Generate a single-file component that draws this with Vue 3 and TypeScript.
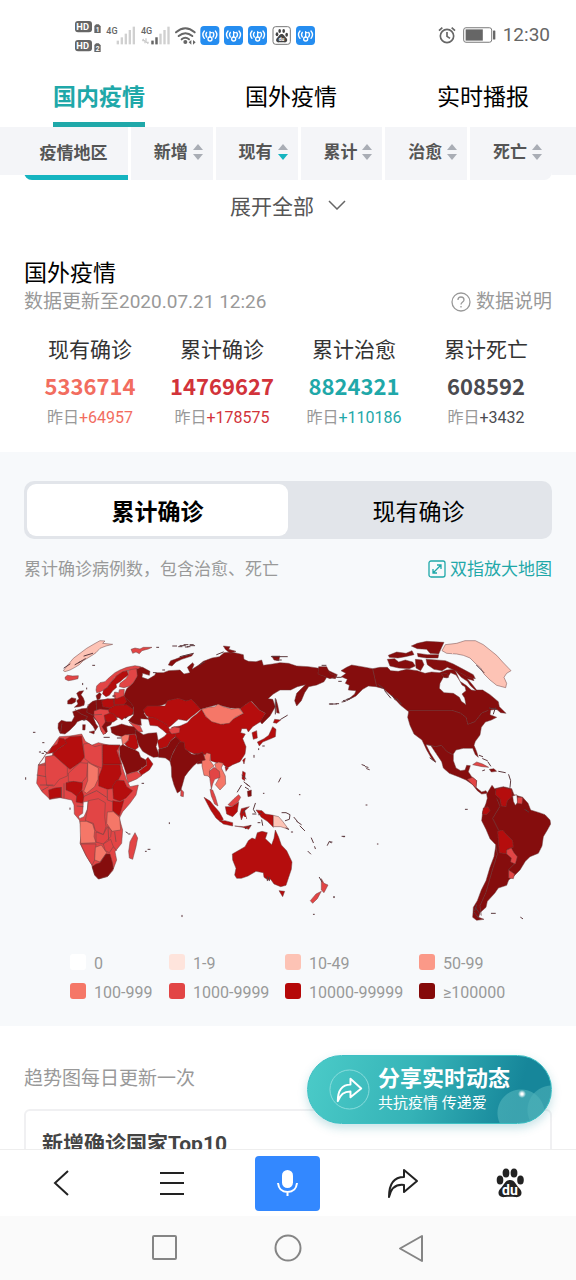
<script setup lang="ts">
import { ref } from 'vue'

interface Stat { label: string; value: string; delta: string; tone: string }
interface Land { c: string; p: string }

const tabs = ['国内疫情', '国外疫情', '实时播报']
const activeTab = ref(0)
const columns = ['新增', '现有', '累计', '治愈', '死亡']
const sorted = ref(1)
const modes = ['累计确诊', '现有确诊']
const mode = ref(0)

const stats: Stat[] = [
  { label: '现有确诊', value: '5336714', delta: '+64957', tone: 'orange' },
  { label: '累计确诊', value: '14769627', delta: '+178575', tone: 'red' },
  { label: '累计治愈', value: '8824321', delta: '+110186', tone: 'teal' },
  { label: '累计死亡', value: '608592', delta: '+3432', tone: 'dark' },
]

const legend = [
  { text: '0', c: 'l0' }, { text: '1-9', c: 'l1' }, { text: '10-49', c: 'l2' }, { text: '50-99', c: 'l3' },
  { text: '100-999', c: 'l4' }, { text: '1000-9999', c: 'l5' }, { text: '10000-99999', c: 'l6' }, { text: '≥100000', c: 'l7' },
]

const west: Land[] = [
  { c: 'l2', p: '130,122 145,103 160,85 180,70 200,55 222,42 240,32 255,33 248,40 278,43 258,48 240,55 228,68 218,75 205,83 190,92 178,104 165,112 150,120 135,125' },
  { c: 'l5', p: '135,142 142,136 158,138 175,137 174,146 158,150 145,152 136,148' },
  { c: 'l5', p: '333,58 345,54 360,57 370,52 396,52 385,57 366,62 358,71 348,66 338,70' },
  { c: 'l7', p: '445,105 452,92 465,88 490,78 520,71 515,78 485,88 468,96 456,108' },
  { c: 'l5', p: '228,180 230,168 240,158 255,155 265,145 285,128 300,120 320,112 345,107 362,110 356,116 335,120 320,122 300,132 285,142 272,158 262,172 250,180 240,186 230,188' },
  { c: 'l6', p: '248,192 250,180 262,172 272,158 290,137 308,125 322,122 325,135 312,145 300,155 288,163 290,172 278,182 268,196 258,200' },
  { c: 'l5', p: '325,122 335,118 350,116 352,138 342,155 330,168 312,173 298,170 300,160 318,146 325,134' },
  { c: 'l7', p: '228,197 238,188 244,192 240,206 232,210' },
  { c: 'l7', p: '170,190 178,184 191,182 183,194 190,204 194,215 192,226 178,230 163,232 174,222 170,212 177,206' },
  { c: 'l7', p: '143,212 155,203 168,206 166,216 155,222 143,222' },
  { c: 'l7', p: '115,280 124,271 140,275 155,275 163,260 158,245 172,240 185,236 200,235 208,222 218,214 232,210 260,208 295,205 312,200 330,215 340,230 340,252 325,258 318,265 300,262 285,262 277,275 272,285 260,290 262,305 255,312 245,305 240,288 230,272 220,262 228,282 234,290 226,302 220,290 208,276 200,270 185,270 172,275 165,285 150,300 135,312 120,310 114,295' },
  { c: 'l6', p: '245,212 262,206 280,208 283,230 268,234 248,230' },
  { c: 'l6', p: '283,208 295,193 312,195 320,215 310,225 283,224' },
  { c: 'l6', p: '262,240 285,226 320,224 342,240 335,255 315,262 306,270 295,262 270,258' },
  { c: 'l5', p: '284,186 296,188 298,179 313,178 312,197 290,206 280,200' },
  { c: 'l6', p: '248,254 270,248 284,254 292,268 280,276 260,276' },
  { c: 'l5', p: '222,243 240,237 265,240 268,250 252,256 256,276 246,290 258,308 250,314 242,300 236,280 222,260' },
  { c: 'l7', p: '188,284 196,284 195,300 188,300' },
  { c: 'l7', p: '207,306 224,302 222,312' },
  { c: 'l7', p: '272,292 288,288 305,282 325,288 345,290 355,302 350,312 325,314 308,320 288,316 275,308' },
  { c: 'l5', p: '328,277 345,282 360,287 368,305 356,306 346,295' },
  { c: 'l4', p: '304,320 315,314 330,314 326,330 308,346' },
  { c: 'l6', p: '328,314 346,312 352,330 355,352 345,360 322,350 314,342 326,330' },
  { c: 'l7', p: '298,350 308,344 325,352 345,360 356,366 362,382 378,390 380,404 366,415 350,425 335,428 320,434 310,405 300,382' },
  { c: 'l6', p: '378,388 384,382 399,402 388,420 364,436 356,424 380,406' },
  { c: 'l5', p: '318,434 350,424 366,436 350,447 324,458' },
  { c: 'l7', p: '345,300 358,306 370,314 386,310 410,308 414,330 408,350 420,380 400,382 385,374 368,364 356,345 350,325' },
  { c: 'l6', p: '384,262 400,262 425,275 440,284 450,300 462,306 448,318 428,300 412,288 390,286' },
  { c: 'l6', p: '412,332 432,320 440,312 462,306 468,318 452,332 442,350 418,358' },
  { c: 'l5', p: '446,300 462,290 480,294 478,308 455,312' },
  { c: 'l7', p: '416,358 442,350 452,332 468,320 482,334 462,362 456,376 450,394 436,384 416,382' },
  { c: 'l7', p: '450,394 456,376 468,352 478,336 492,336 495,356 515,372 530,374 548,366 556,390 535,395 520,408 505,425 494,440 488,462 482,482 472,489 462,465 455,440 454,412' },
  { c: 'l5', p: '483,478 491,486 490,500 482,498' },
  { c: 'l5', p: '118,320 150,318 185,312 196,334 215,346 235,338 268,346 300,345 296,365 302,390 308,415 320,450 330,470 355,465 348,495 330,520 308,545 298,565 308,600 305,640 285,665 290,690 278,722 262,740 235,747 224,735 215,704 197,675 180,640 186,600 178,570 163,552 162,525 155,510 120,503 90,508 66,485 50,460 55,405 78,372 95,352' },
  { c: 'l6', p: '130,332 150,320 185,318 188,345 194,380 182,396 150,418 128,400 100,376 100,366 132,345' },
  { c: 'l6', p: '84,374 96,350 112,342 118,324 132,326 140,340 118,354 104,366' },
  { c: 'bg', p: '55,405 68,388 78,372 98,368 97,378 80,380 76,398' },
  { c: 'l5', p: '190,342 205,340 225,350 246,344 247,415 215,402 194,386' },
  { c: 'l6', p: '248,344 300,346 290,362 304,403 248,403' },
  { c: 'l6', p: '248,403 300,403 304,432 292,455 285,475 262,478 236,468 236,440 246,415' },
  { c: 'l4', p: '203,397 235,414 234,448 224,470 200,490 191,484 203,452' },
  { c: 'l5', p: '145,430 180,398 203,400 200,440 185,458 145,455' },
  { c: 'l5', p: '76,380 102,376 142,412 142,438 118,448 102,468 80,466 76,430' },
  { c: 'l6', p: '138,458 160,454 188,458 186,478 172,500 155,487 138,480' },
  { c: 'l6', p: '86,480 104,474 124,472 124,502 106,503 88,508' },
  { c: 'l6', p: '170,498 186,480 192,500 188,520 168,516' },
  { c: 'bg', p: '190,516 204,514 202,538 192,560 178,566 176,558 188,550' },
  { c: 'l6', p: '278,468 290,450 312,452 320,470 338,482 318,504 300,514 280,506' },
  { c: 'l6', p: '278,512 300,516 312,510 305,535 298,558 278,542' },
  { c: 'l4', p: '262,546 280,545 299,562 302,600 276,604 260,580' },
  { c: 'l5', p: '205,512 235,506 256,518 254,560 258,590 250,614 226,602 220,580 196,572 202,540' },
  { c: 'l4', p: '180,574 200,574 218,582 224,602 222,620 228,638 182,640' },
  { c: 'l5', p: '228,606 250,614 262,590 274,602 272,620 250,642 228,636' },
  { c: 'l5', p: '182,642 228,642 224,690 216,706 200,680' },
  { c: 'l4', p: '226,652 244,645 260,668 240,696 224,690' },
  { c: 'l5', p: '250,642 272,628 280,650 268,668 256,662' },
  { c: 'l7', p: '216,710 228,702 240,698 258,672 270,672 278,700 280,716 264,738 236,747 224,735' },
  { c: 'l5', p: '345,608 353,624 348,650 338,688 328,684 326,664 330,635' },
]

const east: Land[] = [
  { c: 'l7', p: '-135,110 -112,112 -90,124 -92,136 -112,130 -114,142 -96,148 -76,136 -72,128 -50,128 -34,122 0,120 12,132 30,128 22,112 38,98 42,104 36,118 55,106 70,94 96,84 118,80 132,68 155,66 190,74 192,88 205,94 228,95 245,90 250,106 278,102 300,98 325,100 350,108 385,110 412,114 442,120 472,134 466,146 440,142 432,155 410,165 386,170 374,188 364,212 350,228 344,212 350,190 376,164 352,170 332,180 300,180 280,192 264,206 278,208 286,230 270,258 246,282 238,272 256,250 238,240 215,214 196,225 190,236 150,234 112,224 62,238 -20,212 -60,228 -100,238 -108,250 -100,262 -92,268 -118,266 -116,286 -135,284 -155,272 -140,256 -140,232 -166,214 -168,196 -160,176 -142,160 -130,140' },
  { c: 'l6', p: '-110,240 -98,228 -45,228 -38,212 -5,205 18,213 35,208 62,238 48,250 32,262 20,272 -5,268 -28,288 -40,296 -62,280 -90,264 -102,256' },
  { c: 'l6', p: '-25,292 0,288 22,278 34,264 50,252 65,238 78,260 98,274 130,283 158,268 190,250 180,236 196,224 212,213 238,240 256,250 240,276 218,290 205,306 200,296 185,296 182,308 196,312 188,326 198,350 195,372 180,395 158,404 142,414 128,402 110,398 92,392 90,374 72,374 48,374 20,362 2,346 -12,326' },
  { c: 'l4', p: '65,238 85,232 105,230 114,222 130,230 155,237 176,234 190,250 164,263 148,280 122,283 95,275 78,260' },
  { c: 'l7', p: '45,370 70,374 66,400 52,402' },
  { c: 'l4', p: '66,388 80,368 92,372 90,392 102,408 90,418 92,446 84,438 72,436 66,408' },
  { c: 'l4', p: '104,402 116,396 130,400 124,414 136,438 137,462 120,480 106,464 116,446' },
  { c: 'l5', p: '88,424 102,412 118,424 120,442 104,448 98,462 94,478 90,450' },
  { c: 'l5', p: '90,478 98,480 106,500 114,528 104,522 94,498' },
  { c: 'l6', p: '216,308 230,302 232,324 220,328' },
  { c: 'l6', p: '278,290 288,298 286,320 268,328 248,336 238,348 232,336 252,326 266,316' },
  { c: 'l6', p: '284,268 302,270 290,280 280,278' },
  { c: 'l7', p: '288,208 293,225 298,250 290,248 288,230' },
  { c: 'l6', p: '188,390 196,384 192,402' },
  { c: 'l6', p: '135,410 145,414 138,424' },
  { c: 'l6', p: '72,502 90,513 104,530 118,546 130,568 122,576 108,564 92,540' },
  { c: 'l6', p: '118,572 135,572 158,578 158,588 130,582' },
  { c: 'l6', p: '164,588 190,590 214,586 206,598 188,592' },
  { c: 'l6', p: '136,530 155,530 176,516 172,545 158,560 140,552' },
  { c: 'l5', p: '144,524 162,506 176,494 182,502 174,516 155,530' },
  { c: 'l6', p: '184,536 208,530 194,542 200,566 190,556 184,570 180,552' },
  { c: 'l6', p: '228,540 246,542 256,552 280,556 280,592 262,574 244,562' },
  { c: 'l2', p: '280,556 296,560 308,574 326,598 302,590 280,590' },
  { c: 'l6', p: '188,424 196,428 194,452 186,446' },
  { c: 'l7', p: '202,484 214,480 214,498 204,500' },
  { c: 'l6', p: '157,672 178,660 195,650 205,632 216,624 226,628 232,608 246,604 262,608 256,626 275,644 282,625 286,600 296,622 304,645 320,662 336,696 334,718 318,766 302,770 282,762 272,748 264,750 252,742 250,728 228,724 204,738 184,745 170,745 164,735 168,715 158,690' },
  { c: 'l6', p: '297,782 314,784 308,800' },
  { c: 'l5', p: '424,746 432,760 444,765 432,788 424,780' },
  { c: 'l5', p: '424,784 412,806 398,820 391,812 408,792' },
  { c: 'l7', p: '130,48 150,50 146,58 168,64 150,70 136,58' },
  { c: 'l7', p: '275,78 300,78 296,92 282,90' },
]

const americas: Land[] = [
  { c: 'l7', p: '-34,110 -10,110 0,130 20,138 0,146 -20,138 -36,132' },
  { c: 'l7', p: '33,122 50,112 65,105 95,110 128,116 150,112 172,112 182,122 205,124 230,118 262,122 285,130 305,126 328,128 350,120 372,118 400,122 428,140 432,152 412,146 428,165 440,180 458,180 480,194 505,215 508,230 528,250 512,248 500,238 482,240 480,254 500,262 484,270 466,276 454,292 450,315 436,334 432,346 440,365 445,382 436,374 428,355 400,355 378,360 370,372 370,392 378,414 392,422 405,420 410,406 421,407 415,425 425,440 440,452 438,472 455,486 468,482 472,490 455,492 442,482 428,464 408,450 385,440 358,430 340,414 335,395 318,370 302,346 288,344 300,368 318,396 306,388 290,360 276,330 252,312 240,286 233,262 236,245 212,226 188,200 160,176 138,170 115,168 98,178 78,198 50,212 74,192 78,182 55,180 58,166 46,160 52,148 34,140 48,130' },
  { c: 'bg', p: '340,142 352,144 362,128 378,135 388,150 396,165 405,170 408,182 396,192 404,204 408,224 394,214 388,202 370,190 342,188 328,175 330,160' },
  { c: 'bg', p: '376,122 394,142 412,154 422,168 438,182 424,180 408,166 390,154' },
  { c: 'l7', p: '244,48 262,40 290,34 342,37 335,52 326,72 300,70 290,58 262,56' },
  { c: 'l7', p: '175,76 200,66 228,70 246,62 252,74 226,80 204,84 178,82' },
  { c: 'l7', p: '172,88 194,86 206,96 226,90 248,96 256,108 238,116 206,114 180,108' },
  { c: 'l7', p: '256,88 276,90 282,104 272,122 258,114' },
  { c: 'l7', p: '262,70 292,74 326,74 324,84 290,84 264,80' },
  { c: 'l7', p: '288,88 320,90 346,92 370,102 400,118 430,134 436,146 416,142 386,126 352,112 336,122 312,118 292,104' },
  { c: 'l7', p: '334,132 350,130 356,142 342,142' },
  { c: 'l2', p: '336,62 346,44 380,40 405,32 436,32 460,44 480,60 500,76 518,96 543,122 530,130 522,142 530,160 527,173 500,166 480,150 462,132 452,114 438,102 420,84 400,76 380,72 350,70' },
  { c: 'l5', p: '428,404 440,396 458,402 476,412 456,410' },
  { c: 'l7', p: '478,418 492,416 500,424 484,426' },
  { c: 'l5', p: '412,448 428,442 440,452 438,474 428,464' },
  { c: 'l7', p: '470,492 486,466 494,476 520,470 545,476 552,494 578,502 594,520 602,540 628,548 645,554 660,570 662,582 652,600 640,620 636,648 625,670 600,680 586,694 570,720 552,738 536,750 530,766 505,774 494,790 472,814 468,832 450,848 446,862 462,868 440,871 428,862 430,832 442,812 454,780 468,752 480,712 492,680 498,645 480,626 468,598 455,572 458,545 468,520 472,505' },
  { c: 'l6', p: '498,476 520,472 545,478 546,500 532,512 528,530 514,528 510,506 496,494' },
  { c: 'bg', p: '548,498 560,494 564,516 556,526 550,514' },
  { c: 'l5', p: '562,502 578,502 576,522 562,520' },
  { c: 'l6', p: '460,534 474,530 480,542 470,554 457,552' },
  { c: 'l6', p: '503,604 518,600 530,614 548,632 550,652 532,658 530,672 508,668' },
  { c: 'l5', p: '530,660 544,654 552,668 562,680 556,702 542,696 544,684 530,672' },
  { c: 'l5', p: '536,720 554,732 550,746 536,744' },
]

const shield = [421, 492, 564, 708]
</script>

<template>
  <div class="screen">
    <header class="status">
      <svg class="status-left" viewBox="45 48 723 108" aria-label="信号状态">
        <g v-for="(n, i) in ['1', '2']" :key="n" :transform="`translate(0 ${i * 57})`">
          <rect x="45" y="60" width="51" height="34" rx="9" fill="#666" />
          <text x="49" y="87" font-size="28" font-weight="700" fill="#fff">HD</text>
          <path d="M108 70h8l6 6v20h-19V75z" fill="#666" />
          <text x="107" y="93" font-size="20" font-weight="700" fill="#fff">{{ n }}</text>
        </g>
        <g v-for="x in [139, 243]" :key="x" :transform="`translate(${x} 0)`">
          <text x="0" y="100" font-size="27" font-weight="500" fill="#666">4G</text>
          <g fill="#d0d0d0">
            <rect x="31" y="119" width="7" height="11" /><rect x="43" y="109" width="7" height="21" />
            <rect x="55" y="98" width="7" height="32" /><rect x="67" y="87" width="7" height="43" />
            <rect x="79" y="77" width="7" height="53" />
          </g>
        </g>
        <g fill="#666"><rect x="274" y="119" width="7" height="11" /><rect x="286" y="109" width="7" height="21" /></g>
        <path d="M247 119h8m-8 0 4-5m4 5v8M258 112v12m0 0h8m-4 4 4-4" stroke="#ccc" stroke-width="4" fill="none" />
        <g fill="none" stroke="#666" stroke-width="6" stroke-linecap="round">
          <path d="M348 94q28-24 56 0M356 105q20-17 41 0M365 115q11-9 22 0" />
        </g>
        <circle cx="376" cy="123" r="6" fill="#666" />
        <path d="M386 124l8-7v14zM407 124l-8-7v14z" fill="#666" />
        <g v-for="x in shield" :key="x" :transform="`translate(${x} 75)`">
          <rect width="57" height="57" rx="11" fill="#258df0" />
          <g fill="none" stroke="#fff" stroke-width="4" stroke-linecap="round">
            <path d="M12 15q-9 11 0 22M19 19q-5 7 0 14M45 15q9 11 0 22M38 19q5 7 0 14M29 17v16M29 20h5" />
            <circle cx="29" cy="39" r="6" />
          </g>
        </g>
        <rect x="639" y="77" width="52" height="53" rx="8" fill="#fff" stroke="#777" stroke-width="3" />
        <g fill="#444">
          <ellipse cx="651" cy="100" rx="4" ry="6" /><ellipse cx="659" cy="90" rx="4" ry="6" />
          <ellipse cx="671" cy="90" rx="4" ry="6" /><ellipse cx="680" cy="101" rx="4" ry="6" />
          <path d="M665 99c7 0 9 8 14 12 6 6 1 15-7 13h-14c-8 2-13-7-7-13 5-4 7-12 14-12z" />
        </g>
        <text x="656" y="121" font-size="15" font-weight="700" fill="#fff">du</text>
      </svg>
      <div class="status-right">
        <svg class="alarm" viewBox="0 0 54 54" fill="none" stroke="#666" stroke-width="5">
          <circle cx="27" cy="30" r="20" /><path d="M27 18v13l9 6M3 14l10-9M51 14 41 5" />
        </svg>
        <svg class="battery" viewBox="0 0 100 48">
          <rect x="2" y="2" width="85" height="44" rx="7" fill="none" stroke="#777" stroke-width="3" />
          <rect x="8" y="7" width="52" height="34" fill="#666" /><rect x="91" y="10" width="7" height="28" rx="2" fill="#666" />
        </svg>
        <time>12:30</time>
      </div>
    </header>

    <nav class="tabs">
      <button v-for="(t, i) in tabs" :key="t" :class="{ on: activeTab === i }" @click="activeTab = i"><span>{{ t }}</span></button>
    </nav>

    <div class="sortbar">
      <div class="sort-cols">
        <button class="region">疫情地区</button>
        <button v-for="(c, i) in columns" :key="c" class="sort" :class="{ down: sorted === i }" @click="sorted = i">
          {{ c }}
          <svg viewBox="0 0 10 16"><path class="up" d="M5 0l5 6H0z" /><path class="dn" d="M5 16l5-6H0z" /></svg>
        </button>
      </div>
    </div>

    <main class="content">
      <button class="expand">
        展开全部
        <svg viewBox="0 0 18 10"><path d="M1 1l8 8 8-8" fill="none" stroke="#666" stroke-width="1.5" /></svg>
      </button>

      <section class="overview">
        <h2>国外疫情</h2>
        <div class="meta">
          <span>数据更新至2020.07.21 12:26</span>
          <a href="#about">
            <svg viewBox="0 0 20 20" fill="none" stroke="#999" stroke-width="1.3">
              <circle cx="10" cy="10" r="9" /><path d="M7 8q0-3 3-3t3 3c0 2-3 2-3 4.500M10 14v1.500" />
            </svg>
            数据说明
          </a>
        </div>
        <div class="stats">
          <div v-for="s in stats" :key="s.label" class="stat" :class="s.tone">
            <span class="label">{{ s.label }}</span>
            <strong>{{ s.value }}</strong>
            <span class="delta">昨日<em>{{ s.delta }}</em></span>
          </div>
        </div>
      </section>

      <section class="map-panel">
        <div class="segment">
          <button v-for="(m, i) in modes" :key="m" :class="{ on: mode === i }" @click="mode = i">{{ m }}</button>
        </div>
        <div class="caption">
          <span>累计确诊病例数，包含治愈、死亡</span>
          <a href="#map">
            <svg viewBox="0 0 18 18" fill="none" stroke="#1fa8a9" stroke-width="1.3">
              <rect x="1" y="1" width="16" height="16" rx="2" /><path d="M5 13l8-8M9 5h4v4M5 9v4h4" />
            </svg>
            双指放大地图
          </a>
        </div>
        <svg class="map" viewBox="0 0 1584 900" role="img" aria-label="世界疫情地图">
          <defs>
            <filter id="coast" x="0" y="0" width="1" height="1">
              <feTurbulence type="fractalNoise" baseFrequency="0.18" numOctaves="2" seed="4" />
              <feDisplacementMap in="SourceGraphic" scale="4" xChannelSelector="R" yChannelSelector="G" />
            </filter>
          </defs>
          <g filter="url(#coast)">
            <g transform="translate(468 0)">
              <polygon v-for="(l, i) in east" :key="i" :class="['land', l.c]" :points="l.p" />
            </g>
            <g transform="translate(-12 0)">
              <polygon v-for="(l, i) in west" :key="i" :class="['land', l.c]" :points="l.p" />
              <path class="border" d="M165 238l18 14 20 8-8 10M205 222l-5 25 18 8 28-2M228 212l2 28M55 405h22M50 435l28 5M60 465h40M64 482l22-12M124 472v32M132 460v44M190 500l40-18 30 20M262 480v30l16 5M264 590l2 40M284 606l4 30M280 650l10 12M170 528l20 2M126 280l-4 28" />
              <path class="islets" d="M458 48h12M476 50h10M492 44h12M496 51h8M510 47h14M410 52h6M218 106h6M188 160v4M200 174v3M192 268v4M252 322h16M292 324h10M58 366h4M66 370h5M73 364l8 4M40 307h5M68 338h4M17 443v5M366 460h5M318 606l6 4M326 612h4M376 664h3M384 658h6M448 578v3M400 128h8M428 120h6M278 198h8M150 534v4M132 114l18-12M165 104l18-10M192 78l26-8M176 98l20-12" />
            </g>
            <g transform="translate(918 0)">
              <polygon v-for="(l, i) in americas" :key="i" :class="['land', l.c]" :points="l.p" />
              <path class="border" d="M128 116l12 54M236 241h130l25 8 18 14 4 20 22-8 20-26 20-8M292 344l24 6 18-4 16 18 18 10M500 505l10 24-22 36 18 36M497 645l5 28-14 44-20 70-18 40 4 30M553 702l-18 18" />
              <path class="islets" d="M96 404l8 3M106 410l8 2M110 416l8 3M108 525h3M406 538h6M36 619h8M0 636h6M142 642h2M12 800v3M484 850h12M572 862l6 4M448 376l10 4M458 386l14 6M474 396l8 12M464 420l-6 2M506 424l20 4M536 434l6 18-2 20M0 222h8M18 221h8M36 216l10-2M50 208l18-6M146 164l18 14M164 182l18 22M186 196l10 14M200 206l14 16M496 234l-6 18M300 384l16 12M584 538l12 8M436 832l14 20M432 846l14 18M440 824l-6 18M478 234l22 4M440 106l22 22" />
            </g>
            <g transform="translate(468 0)">
              <path class="islets" d="M0 47h16M22 50h8M30 44h10M0 80l40-10M274 80h48M290 90h14M426 106h12M470 142h14M476 154h8M448 222h4M454 222h16M490 212l18-4M302 268l20-12M186 436l12 10M192 456l12 10M200 462l10 8M196 472l10 6M172 486l12-20M226 520l-6 18 6 10M198 534l-10 16M218 552h10M236 554l8-4M234 578h6M245 570l3 16M306 548h12l12 6-2 14-12 4M318 594l8 4M342 562l10 12M350 574l14 10M360 588l14 14M334 606h4M394 624l6 14M404 650l2 6M384 664l8 8M442 646l6-12 6 4M462 800v2M418 742l8 14M222 376v6M236 356v3M248 348h5M250 490h2M296 456l6-12M358 494h2M490 620h4M196 596l16-10M60 104l14-8M110 74l20-8M286 206v46M262 740v12M268 742v10M400 853h3M6 856v4" />
            </g>
          </g>
        </svg>
        <ul class="legend">
          <li v-for="l in legend" :key="l.text"><i :class="l.c"></i>{{ l.text }}</li>
        </ul>
      </section>

      <section class="trend">
        <p>趋势图每日更新一次</p>
        <div class="card"><h3>新增确诊国家Top10</h3></div>
      </section>

      <button class="share">
        <svg class="share-icon" viewBox="0 0 42 42" fill="none">
          <circle cx="21" cy="21" r="20" stroke="#8cdcdc" />
          <path d="M9 33C9 22 13 16 22 16V10l11 10-11 9v-6C15 23 12 26 9 33z" stroke="#fff" stroke-width="2" stroke-linejoin="round" />
        </svg>
        <span><b>分享实时动态</b><small>共抗疫情 传递爱</small></span>
      </button>
    </main>

    <nav class="toolbar">
      <button aria-label="后退"><svg viewBox="0 0 28 28"><path d="M20 2 7 14l13 12" /></svg></button>
      <button aria-label="菜单"><svg viewBox="0 0 28 28"><path d="M2 4h24M2 14h24M2 25h24" /></svg></button>
      <button class="mic" aria-label="语音">
        <svg viewBox="0 0 28 28"><rect x="9" y="1" width="11" height="18" rx="5.500" fill="#fff" stroke="none" /><path d="M5 14q1 9 9.500 9t9.500-9M14.500 23v4" stroke="#fff" /></svg>
      </button>
      <button aria-label="分享"><svg class="wide" viewBox="0 0 32 32"><path d="M2 30C2 17 7 10 17 10V3l13 11-13 11v-7C9 17 4 21 2 30z" stroke-linejoin="round" /></svg></button>
      <button aria-label="百度首页">
        <svg class="paw" viewBox="0 0 28 30">
          <ellipse cx="4" cy="12" rx="3.300" ry="4.500" /><ellipse cx="10" cy="5" rx="3.400" ry="4.600" />
          <ellipse cx="18" cy="5" rx="3.400" ry="4.600" /><ellipse cx="24.500" cy="12" rx="3.300" ry="4.500" />
          <path d="M14 12c5 0 6 5 9 8 5 5 2 10-4 9-3-.5-7-.5-10 0-6 1-9-4-4-9 3-3 4-8 9-8z" />
          <text x="6" y="27" font-size="14" font-weight="700">du</text>
        </svg>
      </button>
    </nav>
    <nav class="system">
      <button aria-label="最近任务"><svg viewBox="0 0 28 28"><rect x="2" y="2" width="23" height="23" rx="1" /></svg></button>
      <button aria-label="主屏幕"><svg viewBox="0 0 28 28"><circle cx="14" cy="14" r="12.500" /></svg></button>
      <button aria-label="返回"><svg viewBox="0 0 28 28"><path d="M25 2v25L3 14.500z" stroke-linejoin="round" /></svg></button>
    </nav>
  </div>
</template>

<style>
body { margin: 0; background: #fff; }
</style>

<style scoped>
.screen { height: 100vh; display: flex; flex-direction: column; overflow: hidden; background: #fff; color: #000; font-family: Roboto, "Noto Sans CJK SC", sans-serif; }
.screen * { box-sizing: border-box; }
button { border: 0; padding: 0; margin: 0; background: none; font: inherit; color: inherit; cursor: pointer; }
a { text-decoration: none; color: inherit; }
h2, h3, p, ul { margin: 0; padding: 0; font-weight: 400; }
svg { display: block; flex: none; }

.status { height: 70px; flex: none; display: flex; justify-content: space-between; align-items: center; padding: 0 26px 0 75px; }
.status-left { width: 241px; height: 36px; }
.status-right { display: flex; align-items: center; gap: 7px; color: #666; font-size: 19px; }
.status-right time { line-height: 24px; }
.alarm { width: 18px; height: 18px; }
.battery { width: 33px; height: 16px; }

.tabs { flex: none; height: 57px; display: grid; grid-template-columns: repeat(3, 1fr); margin: 0 -3px 0 3px; font-size: 23px; }
.tabs button { display: flex; justify-content: center; }
.tabs span { height: 57px; line-height: 56px; border-bottom: 5px solid transparent; }
.tabs .on span { color: #1fa8a9; font-weight: 700; border-color: #1fa8a9; }

.sortbar { flex: none; height: 53px; padding: 0 24px; background: linear-gradient(#f4f5f8 48px, #fff 48px); }
.sort-cols { height: 53px; display: grid; grid-template-columns: 104px repeat(5, 1fr); gap: 3px; border-radius: 0 0 8px 8px; overflow: hidden; background: #fff; font-size: 17px; font-weight: 700; color: #555; }
.sort-cols button { background: #f4f5f8; }
.sort-cols .region { border-bottom: 5px solid #15b4c0; padding: 0 5px 0 0; }
.sort-cols .sort { display: flex; align-items: center; justify-content: flex-end; gap: 5px; padding: 0 10px 6px 0; }
.sort svg { width: 10px; height: 16px; margin-top: 2px; fill: #a9adb5; }
.down .dn { fill: #15b4c0; }

.content { flex: 1; min-height: 0; position: relative; overflow: hidden; }
.expand { width: 100%; height: 49px; display: flex; align-items: center; justify-content: center; gap: 14px; font-size: 21px; color: #555; }
.expand svg { width: 18px; height: 10px; }

.overview { padding: 29px 24px 20px; }
.overview h2 { font-size: 23px; line-height: 32px; }
.meta { display: flex; justify-content: space-between; line-height: 24px; font-size: 19px; color: #999; }
.meta a, .caption a { display: flex; align-items: center; gap: 5px; }
.meta svg { width: 20px; height: 20px; }
.stats { display: grid; grid-template-columns: repeat(4, 1fr); padding-top: 20px; text-align: center; }
.stat { display: flex; flex-direction: column; }
.label { font-size: 21px; line-height: 32px; color: #333; }
.stat strong { font-family: "Noto Sans CJK SC", sans-serif; font-size: 22px; line-height: 38px; }
.delta { font-size: 16px; line-height: 28px; color: #999; }
.delta em { font-style: normal; }
.orange strong, .orange em { color: #f26d5f; }
.red strong, .red em { color: #d2333a; }
.teal strong, .teal em { color: #1fa8a9; }
.dark strong, .dark em { color: #4b4b50; }

.map-panel { background: #f7f9fb; padding: 29px 24px 22px; }
.segment { height: 58px; padding: 3px; display: grid; grid-template-columns: repeat(2, 1fr); border-radius: 10px; background: #e2e5ea; font-size: 23px; }
.segment .on { background: #fff; border-radius: 9px; font-weight: 700; }
.caption { display: flex; justify-content: space-between; padding-top: 18px; line-height: 24px; font-size: 17px; color: #999; }
.caption a { color: #1fa8a9; gap: 4px; }
.caption svg { width: 18px; height: 18px; }
.map { width: 100%; height: auto; margin-top: 49px; }
.land { stroke: #6e4444; stroke-width: 1.5; stroke-linejoin: round; }
.land.bg { fill: #f7f9fb; }
.border { fill: none; stroke: #704848; stroke-width: 2; }
.islets { fill: none; stroke: #5c3a3e; stroke-width: 3; stroke-linecap: round; }
.l0 { fill: #fff; background: #fff; }
.l1 { fill: #fee4dc; background: #fee4dc; }
.l2 { fill: #fdc3b5; background: #fdc3b5; }
.l3 { fill: #fb9988; background: #fb9988; }
.l4 { fill: #f57767; background: #f57767; }
.l5 { fill: #e24545; background: #e24545; }
.l6 { fill: #b50808; background: #b50808; }
.l7 { fill: #850909; background: #850909; }
.legend { list-style: none; display: grid; grid-template-columns: 99px 116px 134px 1fr; row-gap: 5px; padding: 21px 0 0 46px; font-size: 16px; color: #999; }
.legend li { display: flex; align-items: flex-start; gap: 8px; line-height: 26px; height: 24px; }
.legend i { width: 16px; height: 16px; margin-top: 3px; border-radius: 3px; }

.trend { padding: 38px 24px 0; }
.trend p { font-size: 19px; line-height: 30px; color: #999; }
.card { margin-top: 15px; height: 300px; padding: 16px; border: 2px solid #f0f0f2; border-radius: 6px; }
.card h3 { font-size: 21px; line-height: 34px; font-weight: 700; color: #444; }

.share { position: absolute; right: 24px; bottom: 25px; width: 245px; height: 69px; padding-left: 21px; display: flex; align-items: center; gap: 8px; text-align: left; color: #fff; border: 1px solid #3dc0c4; border-radius: 35px; overflow: hidden;
  background: radial-gradient(circle at 214px 38px, #fff 1px, transparent 4px), radial-gradient(circle at 213px 57px, #4cb0b8b0 23px, transparent 24px), radial-gradient(circle at 244px 54px, #4cb0b8a0 24px, transparent 25px), linear-gradient(105deg, #4bcbc8, #35b3b7 45%, #16869a 85%);
  box-shadow: 0 4px 10px #1a8c9c40; }
.share-icon { width: 41px; height: 41px; }
.share span { display: flex; flex-direction: column; }
.share b { font-size: 22px; line-height: 26px; }
.share small { font-size: 15px; line-height: 22px; }

.toolbar { flex: none; height: 67px; padding: 0 14px 0 6px; display: grid; grid-template-columns: 112fr 108fr 122fr 110fr 104fr; place-items: center; background: #fff; border-top: 1px solid #eee; }
.toolbar svg { width: 28px; height: 28px; fill: none; stroke: #222; stroke-width: 2; }
.toolbar .wide { width: 32px; height: 32px; }
.toolbar .paw { height: 30px; fill: #222; stroke: none; }
.toolbar .paw text { fill: #fff; }
.toolbar .mic { width: 65px; height: 55px; display: grid; place-items: center; border-radius: 4px; background: #3388ff; }
.system { flex: none; height: 64px; display: flex; justify-content: center; gap: 95px; background: #fafafa; }
.system svg { width: 28px; height: 28px; fill: none; stroke: #858585; stroke-width: 2; }
</style>
